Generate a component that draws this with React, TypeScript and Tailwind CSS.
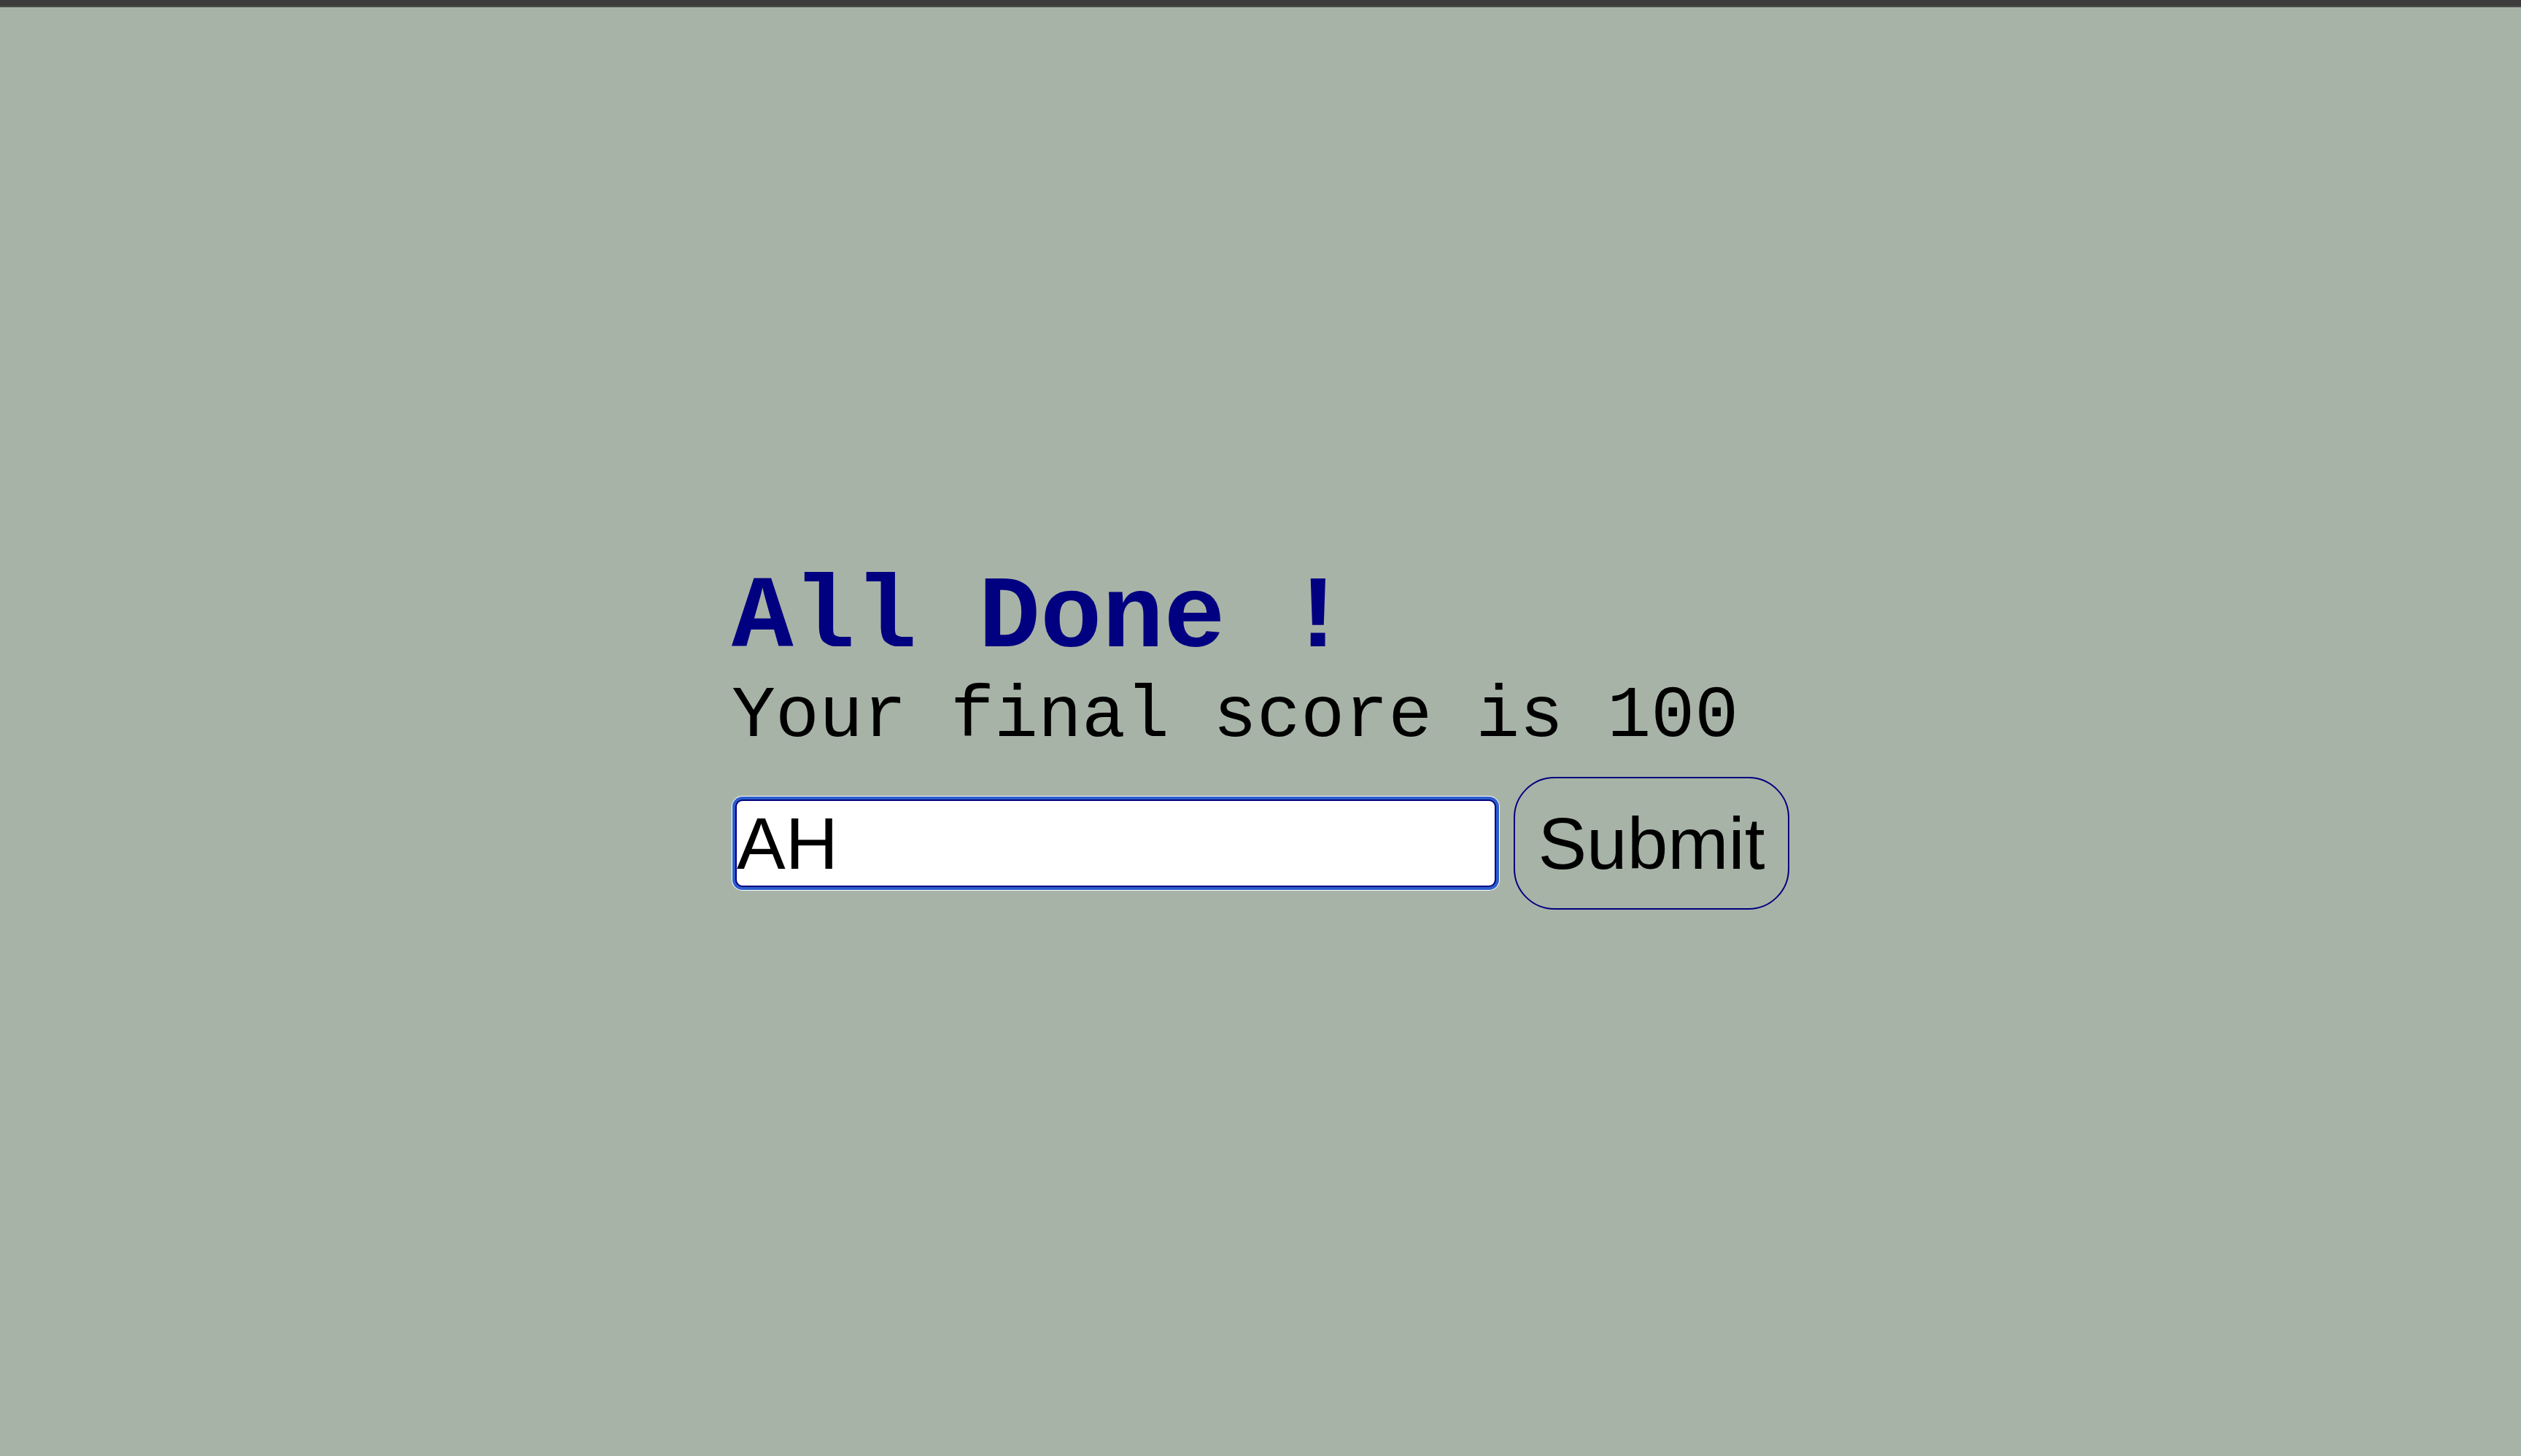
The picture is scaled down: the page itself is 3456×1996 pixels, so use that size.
import { useState } from "react";

const MONO = "font-['Liberation_Mono','Courier_New',monospace]";
const SANS = "font-['Liberation_Sans',Arial,sans-serif]";

export default function App() {
    const [initials, setInitials] = useState("AH");
    const score = 100;

    return (
        <div className="min-h-screen bg-[#a8b3a7]">
            <div className="h-[8px] bg-[#3c3c3c]" />
            <div className="h-[2px] bg-[#4b4d4b]" />

            <div className="flex justify-center pt-[769px]">
                <div className="w-fit">
                    <h1 className={`${MONO} text-[141px] font-bold leading-[140px] text-[#000080]`}>All Done !</h1>
                    <p className={`${MONO} mt-[14px] text-[100px] leading-[100px] text-black`}>Your final score is {score}</p>

                    <form
                        className="mt-[32px] flex items-center"
                        onSubmit={(event) => event.preventDefault()}
                    >
                        <input
                            autoFocus
                            value={initials}
                            onChange={(event) => setInitials(event.target.value)}
                            className={`${SANS} ml-[5px] h-[120px] w-[1043px] rounded-[10px] border-2 border-[#000080] bg-white px-0 text-[100px] text-black shadow-[0_0_0_4px_#2b5dcb,0_0_0_5px_#ffffff] outline-none`}
                        />
                        <button
                            type="submit"
                            className={`${SANS} ml-[24px] h-[182px] w-[378px] rounded-[56px] border-2 border-[#000080] bg-transparent text-center text-[100px] text-black`}
                        >
                            Submit
                        </button>
                    </form>
                </div>
            </div>
        </div>
    );
}
